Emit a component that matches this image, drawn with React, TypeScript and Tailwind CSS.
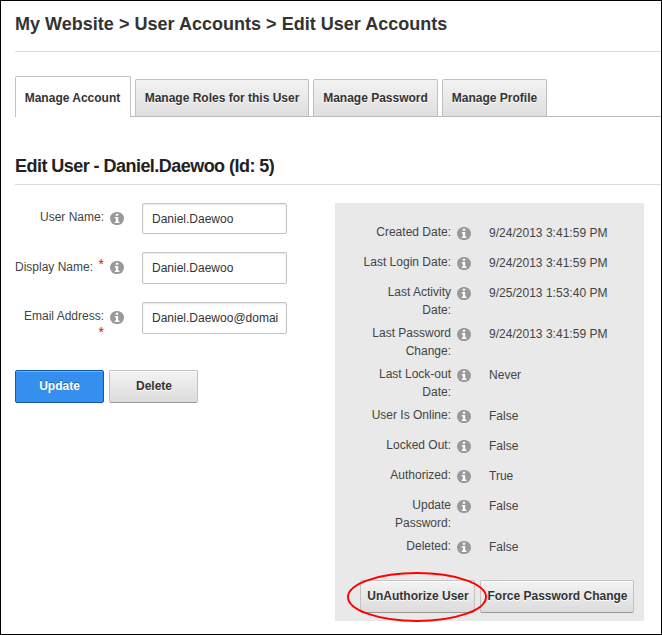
import type { ReactNode } from "react";

function InfoIcon() {
  return (
    <svg width="14" height="13" viewBox="0 0 14 13" className="block shrink-0" aria-hidden="true">
      <ellipse cx="7" cy="6.5" rx="7" ry="6.6" fill="#999" />
      <path d="M5.8 1.8h2.4v2H5.8zM4.8 4.9h3.4v4.5h1.2v1.5H4.8V9.4h1.1v-3H4.8z" fill="#fff" />
    </svg>
  );
}

const tabs = [
  { label: "Manage Roles for this User", box: "w-[174px]" },
  { label: "Manage Password", box: "w-[125px]" },
  { label: "Manage Profile", box: "w-[105px]" },
];

const details = [
  { label: ["Created Date:"], value: "9/24/2013 3:41:59 PM", row: "h-[30px]" },
  { label: ["Last Login Date:"], value: "9/24/2013 3:41:59 PM", row: "h-[30px]" },
  { label: ["Last Activity", "Date:"], value: "9/25/2013 1:53:40 PM", row: "h-[41px]" },
  { label: ["Last Password", "Change:"], value: "9/24/2013 3:41:59 PM", row: "h-[41px]" },
  { label: ["Last Lock-out", "Date:"], value: "Never", row: "h-[41px]" },
  { label: ["User Is Online:"], value: "False", row: "h-[30px]" },
  { label: ["Locked Out:"], value: "False", row: "h-[30px]" },
  { label: ["Authorized:"], value: "True", row: "h-[30px]" },
  { label: ["Update", "Password:"], value: "False", row: "h-[41px]" },
  { label: ["Deleted:"], value: "False", row: "h-[30px]" },
];

function Field({ label, value, row, box }: { label: ReactNode; value: string; row: string; box: string }) {
  return (
    <div className={`flex items-start ${row}`}>
      <div className="w-[89px] shrink-0 pt-[5px] text-right leading-[18px] whitespace-nowrap">{label}</div>
      <div className="ml-[6px] pt-[9px]">
        <InfoIcon />
      </div>
      <input
        readOnly
        value={value}
        className={`ml-[18px] w-[145px] rounded-[2px] border border-[#c4c4c4] bg-white pr-[6px] pl-[9px] text-xs text-[#333] shadow-[inset_0_1px_2px_rgba(0,0,0,0.1)] outline-none ${box}`}
      />
    </div>
  );
}

function Button({ children, width }: { children: ReactNode; width: string }) {
  return (
    <button
      className={`h-[33px] rounded-[2px] border border-[#c2c2c2] border-b-[#999] bg-linear-to-b from-[#f3f3f3] to-[#dcdcdc] pb-[2px] pl-px text-xs font-bold whitespace-nowrap text-[#333] shadow-[inset_0_1px_0_#fff] [text-shadow:0_1px_0_#fff] ${width}`}
    >
      {children}
    </button>
  );
}

export default function App() {
  return (
    <div className="h-[635px] w-[662px] overflow-hidden border border-black bg-white pl-[14px] font-['Liberation_Sans',Arial,sans-serif] text-xs text-[#444]">
      <header className="h-[51px] border-b border-[#dcdcdc] pt-[10px]">
        <h1 className="text-lg leading-[26px] font-bold tracking-[0.02px] whitespace-nowrap text-[#333]">
          My Website &gt; User Accounts &gt; Edit User Accounts
        </h1>
      </header>

      <nav className="flex h-[65px] items-end font-bold text-[#333]">
        <div className="flex h-[41px] w-[116px] items-center justify-center rounded-t-[2px] border border-b-0 border-[#c2c2c2] pt-[2px] pr-px whitespace-nowrap">
          Manage Account
        </div>
        <div className="flex flex-1 items-end gap-[4px] border-b border-[#bbb] pl-[4px]">
          {tabs.map((tab) => (
            <div
              key={tab.label}
              className={`flex h-[37px] items-center justify-center rounded-t-[2px] border border-b-0 border-[#c0c0c0] bg-linear-to-b from-[#f3f3f3] to-[#dedede] whitespace-nowrap [text-shadow:0_1px_0_#fff] ${tab.box}`}
            >
              {tab.label}
            </div>
          ))}
        </div>
      </nav>

      <h2 className="h-[68px] border-b border-[#dcdcdc] pt-[36px] text-lg leading-[26px] font-bold tracking-[-0.54px] whitespace-nowrap text-[#222]">
        Edit User - Daniel.Daewoo (Id: 5)
      </h2>

      <main className="flex pt-[18px]">
        <section className="w-[320px] shrink-0">
          <Field label="User Name:" value="Daniel.Daewoo" row="h-[49px]" box="h-[31px]" />
          <Field
            label={
              <span className="flex items-start justify-between pt-[1px]">
                Display Name:<span className="-mt-[3px] text-[14px] text-[#f00]">*</span>
              </span>
            }
            value="Daniel.Daewoo"
            row="h-[50px]"
            box="h-[32px]"
          />
          <Field
            label={
              <>
                <span className="block">Email Address:</span>
                <span className="-mt-[2px] block text-[14px] text-[#f00]">*</span>
              </>
            }
            value="Daniel.Daewoo@domai"
            row="h-[68px]"
            box="h-[32px]"
          />
          <div className="flex gap-[5px]">
            <button className="h-[33px] w-[89px] rounded-[2px] border border-[#0f5aa6] bg-[#358fee] pb-[2px] font-bold text-white shadow-[inset_0_1px_0_#6db2f6] [text-shadow:0_-1px_0_#1c66b0]">
              Update
            </button>
            <Button width="w-[89px]">Delete</Button>
          </div>
        </section>

        <section className="h-[418px] w-[309px] bg-[#e9e9e9] pt-[19px]">
          <div className="h-[358px]">
            {details.map((item) => (
              <div key={item.label[0]} className={`flex items-start ${item.row}`}>
                <div className="w-[116px] pt-px text-right leading-[18px]">
                  {item.label.map((line) => (
                    <div key={line}>{line}</div>
                  ))}
                </div>
                <div className="ml-[6px] pt-[5px]">
                  <InfoIcon />
                </div>
                <div className="ml-[18px] pt-[2px] leading-[18px] tracking-[0.02px] whitespace-nowrap">{item.value}</div>
              </div>
            ))}
          </div>
          <div className="relative flex gap-[5px] pl-[25px]">
            <Button width="w-[115px]">UnAuthorize User</Button>
            <Button width="w-[154px]">Force Password Change</Button>
            <svg className="absolute -top-[9px] left-[12px]" width="142" height="52" viewBox="0 0 142 52" aria-hidden="true">
              <ellipse cx="70" cy="26" rx="69" ry="24" fill="none" stroke="#f00" strokeWidth="1.9" />
            </svg>
          </div>
        </section>
      </main>
    </div>
  );
}
